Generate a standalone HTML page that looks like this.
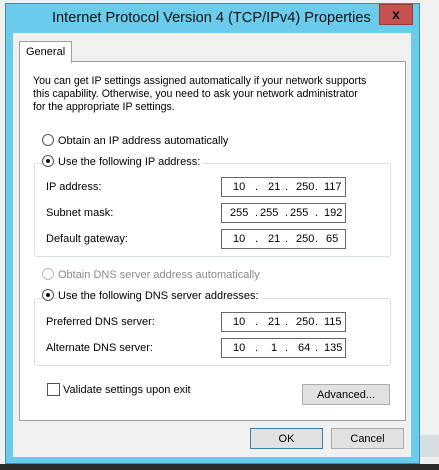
<!DOCTYPE html>
<html><head><style>
*{box-sizing:border-box;margin:0;padding:0}
body{width:439px;height:470px;overflow:hidden;background:#f0f0f0;position:relative;font-family:"Liberation Sans",sans-serif;font-size:11px;color:#000}
.a{position:absolute;white-space:nowrap}
.win{left:5px;top:3px;width:415px;height:461px;background:#6bcbeb;border:1px solid #3a8fb0}
.client{left:13px;top:33px;width:398px;height:424px;background:#f0f0f0}
.panel{left:19px;top:61px;width:387px;height:360px;background:#fff;border:1px solid #a0a0a0}
.tab{left:19px;top:41px;width:53px;height:22px;background:#fff;border:1px solid #a0a0a0;border-bottom:none;padding:4px 0 0 6px}
.grp{border:1px solid #d5dfe5;border-radius:3px}
.rad{width:12px;height:12px;border:1px solid #555;border-radius:50%;background:#fff}
.rad.on::after{content:"";position:absolute;left:3px;top:3px;width:4px;height:4px;border-radius:50%;background:#111}
.rad.dis{border-color:#bbb}
.box{width:125px;height:20px;border:1px solid #666;background:#fff;font-size:11px}
.box span{position:absolute;top:3px}
.btn{background:#e1e1e1;border:1px solid #adadad;text-align:center;padding-top:4px}
.lb{background:#fff;padding:0 2px}
</style></head><body>
<div class="a" style="left:0;top:464px;width:439px;height:6px;background:#2b2b2b"></div>
<div class="a" style="left:420px;top:435px;width:19px;height:22px;background:#d8dde0"></div>
<div class="a win"></div>
<div class="a" style="left:52px;top:10px;font-size:14.6px;color:#111">Internet Protocol Version 4 (TCP/IPv4) Properties</div>
<div class="a" style="left:379px;top:4px;width:34px;height:21px;background:#c75050;border:1px solid #9c3b3b;color:#111;font-weight:bold;font-size:14px;text-align:center;line-height:19px">x</div>
<div class="a client"></div>
<div class="a panel"></div>
<div class="a tab">General</div>
<div class="a" style="left:33px;top:75px;line-height:13px;font-size:10.6px">You can get IP settings assigned automatically if your network supports<br>this capability. Otherwise, you need to ask your network administrator<br>for the appropriate IP settings.</div>

<div class="a rad" style="left:42px;top:134px"></div>
<div class="a" style="left:58px;top:135px;line-height:13px">Obtain an IP address automatically</div>
<div class="a grp" style="left:34px;top:163px;width:357px;height:94px"></div>
<div class="a rad on" style="left:42px;top:155px"></div>
<div class="a lb" style="left:56px;top:156px;line-height:13px">Use the following IP address:</div>
<div class="a" style="left:46px;top:181px">IP address:</div>
<div class="a" style="left:46px;top:207px">Subnet mask:</div>
<div class="a" style="left:46px;top:233px">Default gateway:</div>
<div class="a box" style="left:221px;top:177px"><span style="left:11px">10</span><span style="left:33px">.</span><span style="left:46px">21</span><span style="left:63px">.</span><span style="left:74px">250</span><span style="left:93px">.</span><span style="left:102px">117</span></div>
<div class="a box" style="left:221px;top:203px"><span style="left:8px">255</span><span style="left:33px">.</span><span style="left:38px">255</span><span style="left:63px">.</span><span style="left:68px">255</span><span style="left:93px">.</span><span style="left:102px">192</span></div>
<div class="a box" style="left:221px;top:229px"><span style="left:11px">10</span><span style="left:33px">.</span><span style="left:46px">21</span><span style="left:63px">.</span><span style="left:74px">250</span><span style="left:93px">.</span><span style="left:104px">65</span></div>

<div class="a rad dis" style="left:42px;top:268px"></div>
<div class="a" style="left:58px;top:269px;color:#8a8a8a;line-height:13px">Obtain DNS server address automatically</div>
<div class="a grp" style="left:34px;top:298px;width:357px;height:68px"></div>
<div class="a rad on" style="left:42px;top:289px"></div>
<div class="a lb" style="left:56px;top:290px;line-height:13px">Use the following DNS server addresses:</div>
<div class="a" style="left:46px;top:316px">Preferred DNS server:</div>
<div class="a" style="left:46px;top:342px">Alternate DNS server:</div>
<div class="a box" style="left:221px;top:312px"><span style="left:11px">10</span><span style="left:33px">.</span><span style="left:46px">21</span><span style="left:63px">.</span><span style="left:74px">250</span><span style="left:93px">.</span><span style="left:102px">115</span></div>
<div class="a box" style="left:221px;top:338px"><span style="left:11px">10</span><span style="left:33px">.</span><span style="left:49px">1</span><span style="left:63px">.</span><span style="left:76px">64</span><span style="left:93px">.</span><span style="left:102px">135</span></div>

<div class="a" style="left:47px;top:383px;width:13px;height:13px;border:1px solid #555;background:#fff"></div>
<div class="a" style="left:63px;top:384px">Validate settings upon exit</div>
<div class="a btn" style="left:302px;top:384px;width:88px;height:21px">Advanced...</div>
<div class="a btn" style="left:250px;top:428px;width:73px;height:21px;border-color:#3c7fb1">OK</div>
<div class="a btn" style="left:331px;top:428px;width:73px;height:21px">Cancel</div>
</body></html>
